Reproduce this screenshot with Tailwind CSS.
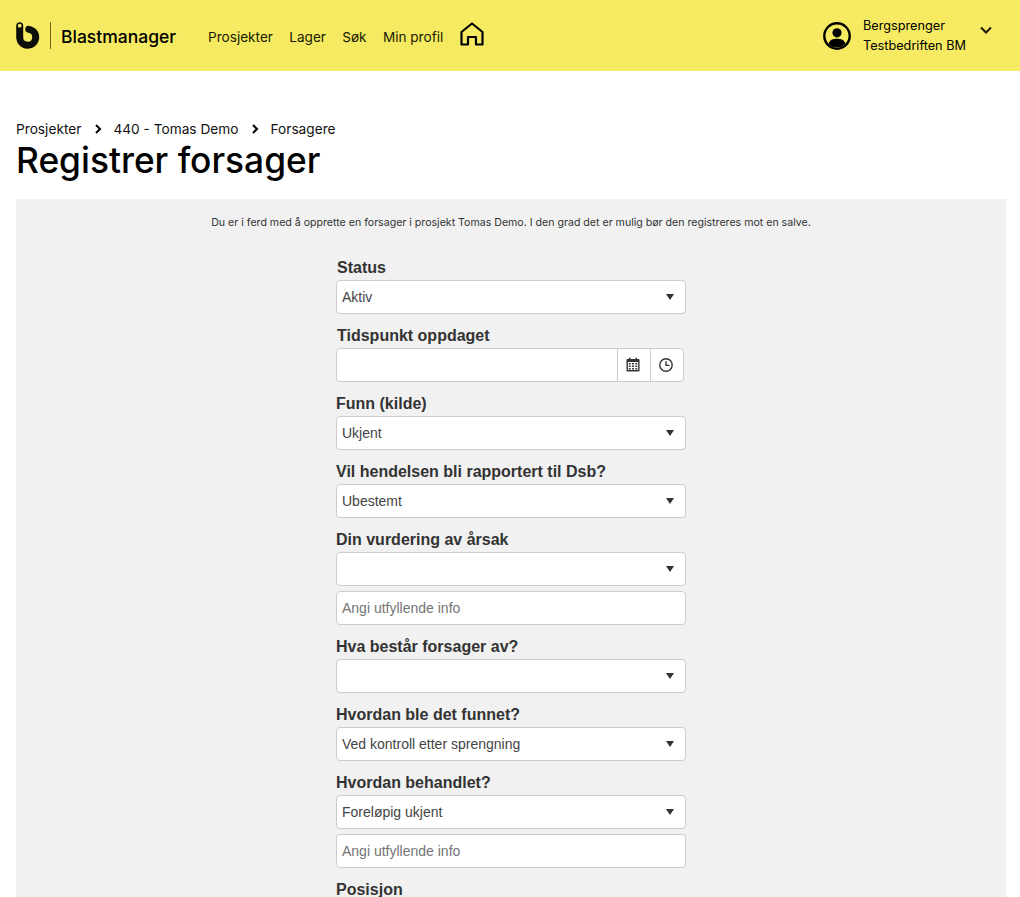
<!DOCTYPE html>
<html lang="no">
<head>
<meta charset="utf-8">
<script src="https://cdn.jsdelivr.net/npm/@tailwindcss/browser@4"></script>
<title>Registrer forsager</title>
</head>
<body class="h-[897px] overflow-hidden bg-white font-['Inter',sans-serif] text-black">
<header class="h-[71px] bg-[#f5ea61] flex items-center">
  <svg class="ml-4 w-6 h-[27px]" viewBox="0 0 24 27" aria-hidden="true">
    <path d="M3.7 3.7 V15.3 A8 8 0 1 0 12.8 7.35" fill="none" stroke="#0d0d08" stroke-width="7" stroke-linecap="round"/>
    <circle cx="3.7" cy="3.7" r="1.9" fill="#f5ea61"/>
  </svg>
  <div class="ml-[10px] w-px h-[27px] bg-[#6b6620]"></div>
  <div class="ml-[10px] pt-1 text-[17.5px] font-medium w-[147px]">Blastmanager</div>
  <nav class="flex items-center gap-[16.3px] text-[13.6px] text-[#1a1a00]">
    <a class="block pt-1">Prosjekter</a><a class="block pt-1">Lager</a><a class="block pt-1">Søk</a><a class="block pt-1">Min profil</a>
    <svg class="w-6 h-6 -mt-0.5" viewBox="0 0 24 24" fill="none" stroke="#000" stroke-width="2.2" stroke-linejoin="round" aria-hidden="true">
      <path d="M1.5 22.5 V10 L12 1.5 L22.5 10 V22.5 H16 V15 H8 V22.5 Z"/>
    </svg>
  </nav>
  <div class="ml-auto flex items-center">
    <svg class="w-7 h-7" viewBox="0 0 28 28" aria-hidden="true">
      <circle cx="14" cy="14" r="12.7" fill="none" stroke="#000" stroke-width="2.4"/>
      <circle cx="14" cy="10.8" r="4.6" fill="#000"/>
      <path d="M5.5 22 C6.5 18 10 16.8 14 16.8 S21.5 18 22.5 22 A12 12 0 0 1 5.5 22 Z" fill="#000"/>
    </svg>
    <div class="ml-[12px] w-[117px] text-[12.7px] leading-5"><div>Bergsprenger</div><div>Testbedriften BM</div></div>
    <svg class="w-3 h-3 mr-[28px] -mt-3" viewBox="0 0 12 12" fill="none" stroke="#1a1a00" stroke-width="2" aria-hidden="true"><path d="M1 3.5 L6 8.5 L11 3.5"/></svg>
  </div>
</header>

<main class="px-4">
  <nav class="mt-[49px] flex items-center text-[13.7px] leading-[18px] text-[#111]">
    <span>Prosjekter</span>
    <svg class="w-2 h-2.5 ml-[13px] mr-[11px]" viewBox="0 0 8 10" fill="none" stroke="#000" stroke-width="2" aria-hidden="true"><path d="M2 1 L6 5 L2 9"/></svg>
    <span>440 - Tomas Demo</span>
    <svg class="w-2 h-2.5 ml-[13px] mr-[11px]" viewBox="0 0 8 10" fill="none" stroke="#000" stroke-width="2" aria-hidden="true"><path d="M2 1 L6 5 L2 9"/></svg>
    <span>Forsagere</span>
  </nav>
  <h1 class="pt-px text-[35.3px] leading-[44px] font-medium">Registrer forsager</h1>

  <section class="mt-4 bg-[#f1f1f1] w-[990px] h-[700px] pt-[17px]">
    <p class="text-center text-[10.6px] leading-[14px] text-[#333]">Du er i ferd med å opprette en forsager i prosjekt Tomas Demo. I den grad det er mulig bør den registreres mot en salve.</p>
    <form class="ml-[320px] w-[350px] mt-[26px] font-['Liberation_Sans',sans-serif] text-[14px] text-[#555]">

      <label class="block pl-px h-[23px] mb-px text-[16px] leading-[23px] font-bold text-[#333]">Status</label>
      <div class="relative h-[34px]">
        <select class="w-full h-full appearance-none bg-white border border-[#ccc] rounded pl-[5px] text-[#444]"><option>Aktiv</option></select>
        <svg class="absolute right-3 top-[13px] w-2 h-2" viewBox="0 0 8 8" aria-hidden="true"><path d="M0 1 H8 L4 7 Z" fill="#333"/></svg>
      </div>

      <label class="block pl-px mt-2.5 h-[23px] mb-px text-[16px] leading-[23px] font-bold text-[#333]">Tidspunkt oppdaget</label>
      <div class="flex h-[34px] w-[348px] bg-white border border-[#ccc] rounded">
        <input type="text" aria-label="Tidspunkt oppdaget" class="flex-1 min-w-0 px-[5px] bg-transparent">
        <div class="w-[33px] flex items-center justify-center border-l border-[#ccc] pr-0.5">
          <svg class="w-[14px] h-[15px] -mt-px" viewBox="0 0 15 15" preserveAspectRatio="none" aria-hidden="true">
            <path d="M1.5 2 H3.2 V.7 H4.8 V2 H10.2 V.7 H11.8 V2 H13.5 A1 1 0 0 1 14.5 3 V13.5 A1 1 0 0 1 13.5 14.5 H1.5 A1 1 0 0 1 .5 13.5 V3 A1 1 0 0 1 1.5 2 Z" fill="#333"/>
            <path d="M2 5 H13 V13 H2 Z" fill="#fff"/>
            <path d="M3 6 H5 V7.5 H3Z M6.5 6 H8.5 V7.5 H6.5Z M10 6 H12 V7.5 H10Z M3 8.5 H5 V10 H3Z M6.5 8.5 H8.5 V10 H6.5Z M10 8.5 H12 V10 H10Z M3 11 H5 V12.5 H3Z M6.5 11 H8.5 V12.5 H6.5Z M10 11 H12 V12.5 H10Z" fill="#333"/>
          </svg>
        </div>
        <div class="w-[33px] flex items-center justify-center border-l border-[#ccc] pr-0.5">
          <svg class="w-[14px] h-[14px] -mt-px" viewBox="0 0 14 14" fill="none" stroke="#333" stroke-width="1.4" aria-hidden="true"><circle cx="7" cy="7" r="6.2"/><path d="M7 3.2 V7.4 H10.5"/></svg>
        </div>
      </div>

      <label class="block mt-2.5 h-[23px] mb-px text-[16px] leading-[23px] font-bold text-[#333]">Funn (kilde)</label>
      <div class="relative h-[34px]">
        <select class="w-full h-full appearance-none bg-white border border-[#ccc] rounded pl-[5px] text-[#444]"><option>Ukjent</option></select>
        <svg class="absolute right-3 top-[13px] w-2 h-2" viewBox="0 0 8 8" aria-hidden="true"><path d="M0 1 H8 L4 7 Z" fill="#333"/></svg>
      </div>

      <label class="block mt-2.5 h-[23px] mb-px text-[16px] leading-[23px] font-bold text-[#333]">Vil hendelsen bli rapportert til Dsb?</label>
      <div class="relative h-[34px]">
        <select class="w-full h-full appearance-none bg-white border border-[#ccc] rounded pl-[5px] text-[#444]"><option>Ubestemt</option></select>
        <svg class="absolute right-3 top-[13px] w-2 h-2" viewBox="0 0 8 8" aria-hidden="true"><path d="M0 1 H8 L4 7 Z" fill="#333"/></svg>
      </div>

      <label class="block mt-2.5 h-[23px] mb-px text-[16px] leading-[23px] font-bold text-[#333]">Din vurdering av årsak</label>
      <div class="relative h-[34px]">
        <select aria-label="Din vurdering av årsak" class="w-full h-full appearance-none bg-white border border-[#ccc] rounded pl-[5px] text-[#444]"><option></option></select>
        <svg class="absolute right-3 top-[13px] w-2 h-2" viewBox="0 0 8 8" aria-hidden="true"><path d="M0 1 H8 L4 7 Z" fill="#333"/></svg>
      </div>
      <input type="text" placeholder="Angi utfyllende info" class="block mt-[5px] w-full h-[34px] bg-white border border-[#ccc] rounded px-[5px] placeholder:text-[#757575]">

      <label class="block mt-2.5 h-[23px] mb-px text-[16px] leading-[23px] font-bold text-[#333]">Hva består forsager av?</label>
      <div class="relative h-[34px]">
        <select aria-label="Hva består forsager av?" class="w-full h-full appearance-none bg-white border border-[#ccc] rounded pl-[5px] text-[#444]"><option></option></select>
        <svg class="absolute right-3 top-[13px] w-2 h-2" viewBox="0 0 8 8" aria-hidden="true"><path d="M0 1 H8 L4 7 Z" fill="#333"/></svg>
      </div>

      <label class="block mt-2.5 h-[23px] mb-px text-[16px] leading-[23px] font-bold text-[#333]">Hvordan ble det funnet?</label>
      <div class="relative h-[34px]">
        <select class="w-full h-full appearance-none bg-white border border-[#ccc] rounded pl-[5px] text-[#444]"><option>Ved kontroll etter sprengning</option></select>
        <svg class="absolute right-3 top-[13px] w-2 h-2" viewBox="0 0 8 8" aria-hidden="true"><path d="M0 1 H8 L4 7 Z" fill="#333"/></svg>
      </div>

      <label class="block mt-2.5 h-[23px] mb-px text-[16px] leading-[23px] font-bold text-[#333]">Hvordan behandlet?</label>
      <div class="relative h-[34px]">
        <select class="w-full h-full appearance-none bg-white border border-[#ccc] rounded pl-[5px] text-[#444]"><option>Foreløpig ukjent</option></select>
        <svg class="absolute right-3 top-[13px] w-2 h-2" viewBox="0 0 8 8" aria-hidden="true"><path d="M0 1 H8 L4 7 Z" fill="#333"/></svg>
      </div>
      <input type="text" placeholder="Angi utfyllende info" class="block mt-[5px] w-full h-[34px] bg-white border border-[#ccc] rounded px-[5px] placeholder:text-[#757575]">

      <label class="block mt-2.5 h-[23px] text-[16px] leading-[23px] font-bold text-[#333]">Posisjon</label>
    </form>
  </section>
</main>
</body>
</html>
